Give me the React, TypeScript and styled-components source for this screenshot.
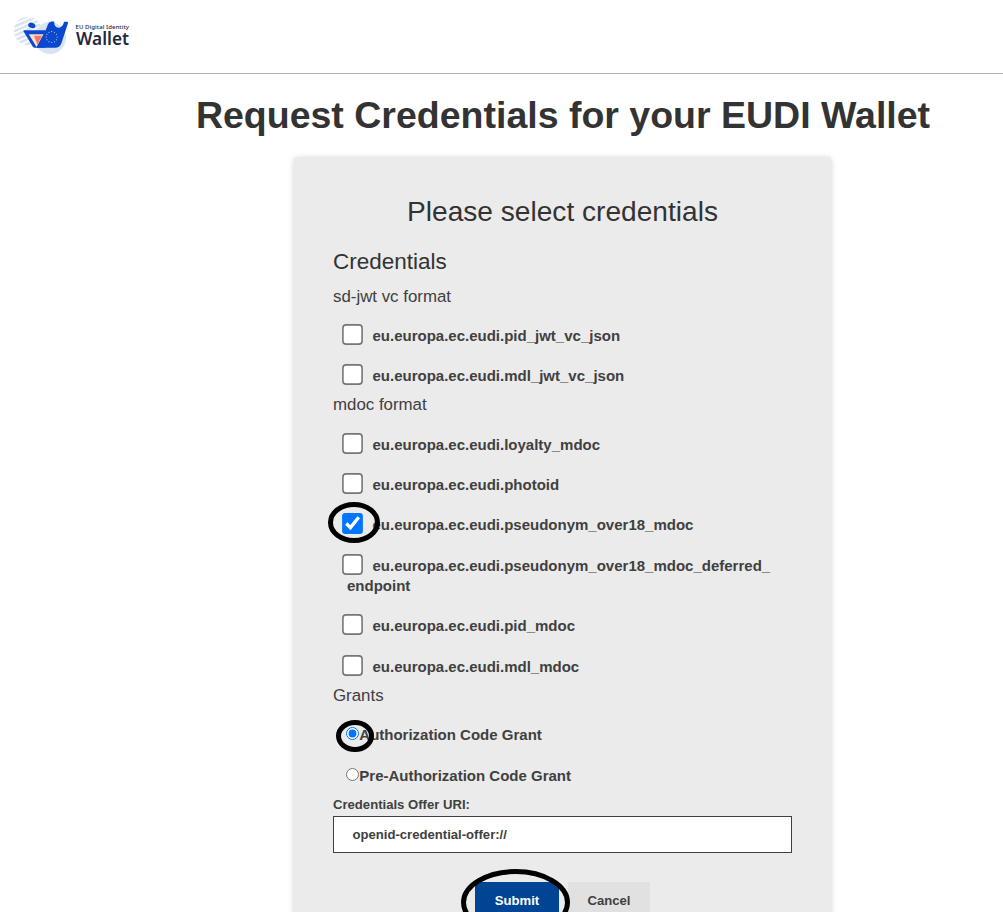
import React from "react";
import styled, { createGlobalStyle } from "styled-components";

const GlobalStyle = createGlobalStyle`
  * { box-sizing: border-box; }
  html { overflow: hidden; }
  body {
    margin: 0;
    background: #fff;
    color: #333;
    font-family: "Liberation Sans", Arial, sans-serif;
    font-size: 15px;
  }
`;

const Page = styled.div`
  height: 912px;
  overflow: hidden;
  display: flex;
  flex-direction: column;
`;

const Header = styled.header`
  height: 74px;
  flex: none;
  padding: 12px 10px;
  border-bottom: 1px solid #b0b0b0;
`;

const Content = styled.main`
  padding-left: 122px;
`;

const Title = styled.h1`
  margin: 0;
  padding: 19px 0 0 1px;
  height: 83px;
  text-align: center;
  font-size: 37.5px;
  line-height: 44px;
  font-weight: 700;
`;

const Card = styled.section`
  width: 536.4px;
  height: 820px;
  margin: 0 auto;
  padding: 38.6px 38.7px;
  background: #ebebeb;
  border-radius: 3px;
  box-shadow: 0 1px 6px rgba(0, 0, 0, 0.18);
`;

const CardTitle = styled.h2`
  margin: 0 0 20.4px;
  text-align: center;
  font-size: 28.125px;
  line-height: 32px;
  font-weight: 400;
`;

const SectionTitle = styled.h3`
  margin: 0 0 12.6px;
  font-size: 22.5px;
  line-height: 27px;
  font-weight: 400;
`;

const GroupTitle = styled.p`
  margin: 0 0 10.2px;
  font-size: 16.875px;
  line-height: 18px;
  color: #404040;
`;

const Option = styled.label`
  display: block;
  position: relative;
  padding: 10px 14px;
  line-height: 20.36px;
  font-weight: 700;
  color: #404040;
`;

const Check = styled.input`
  width: 13px;
  height: 13px;
  margin: 0 13.5px 0 -1px;
  transform: scale(1.6);
`;

const Radio = styled.input`
  width: 13px;
  height: 13px;
  margin: 0 0 0 -0.7px;
`;

const Ring = styled.svg`
  position: absolute;
  overflow: visible;
  pointer-events: none;
`;

const FieldLabel = styled.label`
  display: block;
  margin-bottom: 2px;
  font-size: 13.125px;
  line-height: 18px;
  font-weight: 700;
  color: #404040;
`;

const TextField = styled.input`
  display: block;
  width: 100%;
  height: 37px;
  padding: 0 18.5px;
  border: 1px solid #404040;
  border-radius: 0;
  background: #fff;
  color: #404040;
  font: 700 13.125px "Liberation Sans", Arial, sans-serif;
`;

const Actions = styled.div`
  display: flex;
  justify-content: center;
  gap: 9px;
  margin-top: 29px;
`;

const ButtonWrap = styled.div`
  position: relative;
`;

const Button = styled.button<{ $primary?: boolean; $width: number }>`
  display: block;
  width: ${(p) => p.$width}px;
  height: 37px;
  padding: 0;
  border: 0;
  background: ${(p) => (p.$primary ? "#004494" : "#e1e1e1")};
  color: ${(p) => (p.$primary ? "#fff" : "#404040")};
  font: 700 13.125px "Liberation Sans", Arial, sans-serif;
`;

type HighlightProps = { left: number; top: number; rx: number; ry: number };

function Highlight({ left, top, rx, ry }: HighlightProps) {
  const w = rx * 2 + 5;
  const h = ry * 2 + 5;
  return (
    <Ring width={w} height={h} style={{ left, top }}>
      <ellipse cx={w / 2} cy={h / 2} rx={rx} ry={ry} fill="none" stroke="#000" strokeWidth="5" />
    </Ring>
  );
}

function Logo() {
  const stars = Array.from({ length: 12 }, (_, i) => {
    const a = (i * Math.PI) / 6;
    return <circle key={i} cx={41.7 + 5.5 * Math.cos(a)} cy={25 + 5.5 * Math.sin(a)} r="0.6" fill="#c9dccf" />;
  });
  return (
    <svg width="124" height="46" viewBox="0 0 124 46">
      <defs>
        <clipPath id="stripes">
          <circle cx="18" cy="19" r="14" />
        </clipPath>
      </defs>
      <g clipPath="url(#stripes)" stroke="#dae3f3" strokeWidth="2.6">
        {[0, 1, 2, 3, 4, 5, 6, 7].map((i) => (
          <path key={i} d={`M2 ${11 + i * 4.6} L34 ${-3 + i * 4.6}`} />
        ))}
      </g>
      <circle cx="40" cy="26" r="16" fill="#dae3f3" />
      <path d="M14.3 18.3H36L35 35.8H24.5Q23.500 35.800 23 35L13.600 19.600Q13 18.300 14.300 18.300Z" fill="#0a48cf" />
      <path d="M18.8 22.3H33.500L26.500 35Z" fill="#fbe0be" />
      <path d="M24 23.800H32L27.400 32.600Z" fill="#fa7268" />
      <ellipse cx="21.8" cy="13.400" rx="3.700" ry="2.600" transform="rotate(20 21.8 13.400)" fill="#0a48cf" />
      <path d="M41.500 9.500h2.800c-.4 4 1.700 6.200 4.300 6.200s4.700-2.500 5.400-6h3.200q1.300 0 .8 1.500L51.300 31.500q-1.800 4.300-6 4.300H26.500L33 25L38 12.300q1.100-2.800 3.500-2.800Z" fill="#0a48cf" />
      {stars}
      <text x="65.500" y="16.600" fontFamily="Noto Sans, sans-serif" fontWeight="500" fontSize="6" textLength="53.500" fill="#25283d">EU Digital Identity</text>
      <text x="66" y="33" fontFamily="Noto Sans, sans-serif" fontWeight="600" fontSize="17.500" textLength="53" lengthAdjust="spacingAndGlyphs" fill="#25283d">Wallet</text>
    </svg>
  );
}

const sdJwt = ["eu.europa.ec.eudi.pid_jwt_vc_json", "eu.europa.ec.eudi.mdl_jwt_vc_json"];
const mdoc = [
  "eu.europa.ec.eudi.loyalty_mdoc",
  "eu.europa.ec.eudi.photoid",
  "eu.europa.ec.eudi.pseudonym_over18_mdoc",
  "eu.europa.ec.eudi.pseudonym_over18_mdoc_deferred_endpoint",
  "eu.europa.ec.eudi.pid_mdoc",
  "eu.europa.ec.eudi.mdl_mdoc",
];
const selected = "eu.europa.ec.eudi.pseudonym_over18_mdoc";

function Credential({ id }: { id: string }) {
  const [head, tail] = id.split("_endpoint");
  return (
    <Option>
      <Check type="checkbox" defaultChecked={id === selected} />
      {head}
      {tail !== undefined && <>_<wbr />endpoint</>}
      {id === selected && <Highlight left={-5} top={-3} rx={23.5} ry={18} />}
    </Option>
  );
}

export default function App() {
  return (
    <>
      <GlobalStyle />
      <Page>
        <Header>
          <Logo />
        </Header>
        <Content>
          <Title>Request Credentials for your EUDI Wallet</Title>
          <Card>
            <CardTitle>Please select credentials</CardTitle>
            <SectionTitle>Credentials</SectionTitle>
            <GroupTitle>sd-jwt vc format</GroupTitle>
            {sdJwt.map((id) => <Credential key={id} id={id} />)}
            <GroupTitle>mdoc format</GroupTitle>
            {mdoc.map((id) => <Credential key={id} id={id} />)}
            <GroupTitle>Grants</GroupTitle>
            <Option>
              <Radio type="radio" name="grant" defaultChecked />
              Authorization Code Grant
              <Highlight left={3} top={5} rx={16.5} ry={13.5} />
            </Option>
            <Option>
              <Radio type="radio" name="grant" />
              Pre-Authorization Code Grant
            </Option>
            <FieldLabel htmlFor="uri">Credentials Offer URI:</FieldLabel>
            <TextField id="uri" defaultValue="openid-credential-offer://" />
            <Actions>
              <ButtonWrap>
                <Button $primary $width={84}>Submit</Button>
                <Highlight left={-14} top={-13} rx={52} ry={31} />
              </ButtonWrap>
              <Button $width={82}>Cancel</Button>
            </Actions>
          </Card>
        </Content>
      </Page>
    </>
  );
}
